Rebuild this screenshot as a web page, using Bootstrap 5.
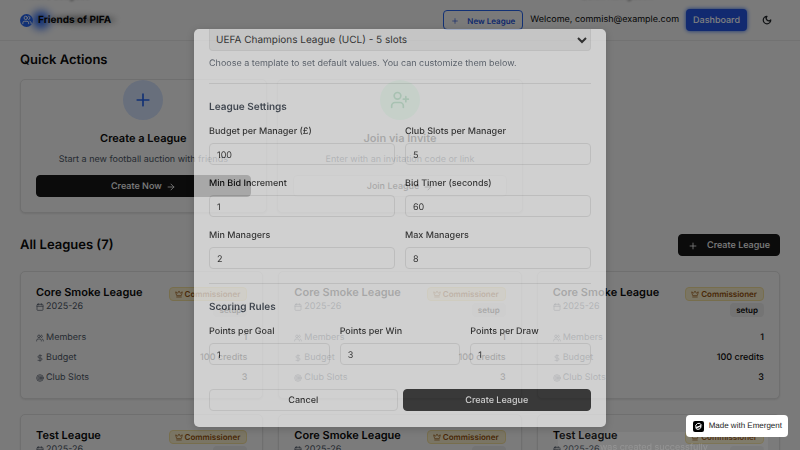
<!DOCTYPE html>
<html lang="en">
<head>
<meta charset="utf-8">
<meta name="viewport" content="width=device-width, initial-scale=1">
<title>Friends of PIFA</title>
<link href="https://cdn.jsdelivr.net/npm/bootstrap@5.3.0/dist/css/bootstrap.min.css" rel="stylesheet">
<style>
body{font-family:Inter,sans-serif;font-size:9px;line-height:14px;color:#0a0a0a;background:#f5f5f5;overflow:hidden;height:100vh;text-rendering:geometricPrecision}
button,input,select{text-rendering:inherit}
svg{fill:none;stroke:currentColor;stroke-width:2;stroke-linecap:round;stroke-linejoin:round;flex:none}
.i8{width:8px;height:8px}.i10{width:10px;height:10px}.i20{width:20px;height:20px}
.btn{font-size:9px;line-height:14px;padding:4px 9px 2px;border-radius:4px;font-weight:500}
.btn-ink{background:#171717;color:#fafafa;border-color:#171717}
.btn-line{background:#fafafa;border-color:#e5e5e5;color:#0a0a0a}
.topbar{height:41px;padding:0 20px;border-bottom:1px solid #e4e4e4;position:relative;overflow:hidden}
.peek{position:absolute;top:-10px;filter:blur(1px);color:#777;font-weight:500}
.peek-left{left:24px}.peek-right{left:580px}
.glow{position:absolute;border-radius:50%}
.glow-blue{left:32px;top:11px;width:18px;height:18px;background:#2563eb;filter:blur(4px)}
.glow-ink{left:48px;top:16px;width:68px;height:8px;background:#999;filter:blur(3px)}
.brand{gap:5px}
.logo-dot{width:13px;height:13px;border-radius:50%;background:#2563eb;color:#fff}
.brand-name{font-size:10px;font-weight:700;color:#0a0a0a;text-decoration:none}
.btn-new{font-size:8px;color:#2452d8;border-color:#2563eb;padding:3px 7px 1px;font-weight:600;gap:8px}
.topnav{gap:7px}
.btn-dash{background:#2455e0;color:#fff;padding:4px 6px 2px;box-shadow:0 0 4px #2563eb}
.btn-moon{padding:3px 7px}
.btn-moon svg{stroke-width:3}
.page{padding:11px 20px 0}
h2{font-size:13px;line-height:16px;font-weight:600;margin:0}
h3{font-size:11px;line-height:16px;font-weight:600;margin:0}
.tiles{display:grid;grid-template-columns:repeat(3,1fr);gap:10px;margin-top:11px}
.leagues{display:grid;grid-template-columns:repeat(3,1fr);gap:15px;margin-top:15px}
.card{border:1px solid #dedede;border-radius:5px;background:#f7f7f7;color:inherit;box-shadow:0 1px 2px #ddd}
.tile{padding:0 15px 15px;text-align:center}
.tile p{margin:7px 0 8px}
.disc{width:40px;height:40px;border-radius:50%;margin:0 auto 10px}
.disc-blue{background:#d0def8;color:#2563eb}.disc-green{background:#bbf7d0;color:#16a34a}
.soft{color:#4b5563}
.listhead{margin-top:21px}
.btn-add{gap:9px}
.league{padding:12px 15px 13px}
.facts{margin-top:14px;gap:6px}
.ico-text{gap:2px}
.tagc{background:#f5ebc8;color:#92500e;border:1px solid #efdc9a;border-radius:4px;padding:0 6px 0 5px;line-height:12px;font-weight:600;font-size:8px;gap:2px}
.tags{background:#e8e8e8;border-radius:4px;padding:0 6px;line-height:14px;font-weight:600;font-size:8px}
.tagcol{gap:2px;padding-top:3px}
.veil{position:fixed;inset:0;background:rgba(0,0,0,.5)}
.stage{position:fixed;inset:0;padding:29px 16px 23px}
.dialog{width:412px;max-width:100%;border-radius:5px;background:#fff;opacity:.65;padding:0 15px 16px;box-shadow:0 2px 8px #0004}
.pick{appearance:auto;display:block;width:100%;height:22px;font-size:10px;background:#efefef;color:#0a0a0a;border:1px solid #e2e2e2;border-top:0;border-radius:0 0 4px 4px;padding:0 2px}
.help{margin:6px 0 12px}
.rule{border-top:1px solid #e2e2e2}
.rule-next{margin-top:14px}
.sub{font-size:10px;line-height:16px;font-weight:600;color:#1f2937;margin:15px 0 10px}
.fields{display:grid;gap:12px 10px}
.two{grid-template-columns:1fr 1fr}.three{grid-template-columns:repeat(3,1fr)}
label{display:block;font-weight:500;margin-bottom:4px}
.form-control{height:22px;font-size:9px;line-height:14px;padding:4px 7px 2px;border:1px solid #e2e2e2;border-radius:4px;background:transparent;color:#0a0a0a}
.actions{margin-top:24px;gap:5px}
.actions .btn{flex:1 1 0}
.actions .btn-line{background:transparent}
.notice{position:fixed;right:32px;bottom:0;width:210px;height:18px;padding:10px 0 0 42px;background:#ffffff0d;color:#ffffff26;line-height:12px;overflow:hidden}
.made{position:fixed;right:12px;bottom:13px;background:#fff;border-radius:4px;color:#222;padding:4px 6px 4px 7px;gap:5px;font:8px/14px "Liberation Sans",sans-serif;text-decoration:none}
.made-mark{width:11px;height:11px}
</style>
<script src="https://cdn.jsdelivr.net/npm/bootstrap@5.3.0/dist/js/bootstrap.bundle.min.js"></script>
</head>
<body>
<svg class="d-none">
<symbol id="plus" viewBox="0 0 24 24"><path d="M5 12h14M12 5v14"/></symbol>
<symbol id="arrow" viewBox="0 0 24 24"><path d="M5 12h14m-7-7 7 7-7 7"/></symbol>
<symbol id="users" viewBox="0 0 24 24"><path d="M16 21v-2a4 4 0 0 0-4-4H6a4 4 0 0 0-4 4v2M22 21v-2a4 4 0 0 0-3-3.9M16 3.1a4 4 0 0 1 0 7.8"/><circle cx="9" cy="7" r="4"/></symbol>
<symbol id="userplus" viewBox="0 0 24 24"><path d="M16 21v-2a4 4 0 0 0-4-4H6a4 4 0 0 0-4 4v2M19 8v6M22 11h-6"/><circle cx="9" cy="7" r="4"/></symbol>
<symbol id="cal" viewBox="0 0 24 24"><rect x="3" y="4" width="18" height="18" rx="2"/><path d="M8 2v4M16 2v4M3 10h18"/></symbol>
<symbol id="dollar" viewBox="0 0 24 24"><path d="M12 2v20M17 5H9.5a3.500 3.500 0 0 0 0 7h5a3.500 3.500 0 0 1 0 7H6"/></symbol>
<symbol id="target" viewBox="0 0 24 24"><circle cx="12" cy="12" r="10"/><circle cx="12" cy="12" r="6"/><circle cx="12" cy="12" r="2"/></symbol>
<symbol id="crown" viewBox="0 0 24 24"><path d="M11.600 3.300a.5.5 0 0 1 .8 0l3 5.600a1 1 0 0 0 1.500.3L21.200 5.500a.5.5 0 0 1 .8.500l-2.800 10.300a1 1 0 0 1-1 .7H5.800a1 1 0 0 1-1-.7L2 6a.5.5 0 0 1 .8-.5l4.300 3.700a1 1 0 0 0 1.500-.3zM5 21h14"/></symbol>
<symbol id="moon" viewBox="0 0 24 24"><path d="M12 3a6 6 0 0 0 9 9 9 9 0 1 1-9-9Z"/></symbol>
</svg>

<header class="topbar d-flex align-items-center justify-content-between">
  <span class="peek peek-left">Active Leagues</span>
  <span class="peek peek-right">Quick Navigation</span>
  <span class="glow glow-blue"></span><span class="glow glow-ink"></span>
  <div class="brand d-flex align-items-center position-relative">
    <span class="logo-dot d-flex align-items-center justify-content-center"><svg class="i10"><use href="#users"/></svg></span>
    <a href="#" class="brand-name">Friends of PIFA</a>
  </div>
  <nav class="topnav d-flex align-items-center">
    <button class="btn btn-new d-flex align-items-center"><svg class="i8"><use href="#plus"/></svg>New League</button>
    <span>Welcome, commish@example.com</span>
    <button class="btn btn-dash">Dashboard</button>
    <button class="btn btn-moon" aria-label="Dark mode"><svg class="i10 d-block"><use href="#moon"/></svg></button>
  </nav>
</header>

<main class="page">
  <h2>Quick Actions</h2>
  <div class="tiles">
    <section class="card tile">
      <div class="disc disc-blue d-flex align-items-center justify-content-center"><svg class="i20"><use href="#plus"/></svg></div>
      <h3>Create a League</h3>
      <p class="soft">Start a new football auction with friends</p>
      <button class="btn btn-ink d-flex align-items-center justify-content-center gap-1">Create Now <svg class="i10"><use href="#arrow"/></svg></button>
    </section>
    <section class="card tile">
      <div class="disc disc-green d-flex align-items-center justify-content-center"><svg class="i20"><use href="#userplus"/></svg></div>
      <h3>Join via Invite</h3>
      <p class="soft">Enter with an invitation code or link</p>
      <button class="btn btn-line d-flex align-items-center justify-content-center gap-1">Join League <svg class="i10"><use href="#arrow"/></svg></button>
    </section>
  </div>
  <div class="listhead d-flex justify-content-between align-items-center">
    <h2>All Leagues (7)</h2>
    <button class="btn btn-ink btn-add d-flex align-items-center"><svg class="i10"><use href="#plus"/></svg>Create League</button>
  </div>
  <div class="leagues" id="leagues"></div>
</main>

<template id="league">
  <section class="card league">
    <div class="d-flex justify-content-between">
      <div>
        <h3></h3>
        <div class="ico-text soft d-flex align-items-center"><svg class="i8"><use href="#cal"/></svg>2025-26</div>
      </div>
      <div class="tagcol d-flex flex-column align-items-end">
        <span class="tagc d-flex align-items-center"><svg class="i8"><use href="#crown"/></svg>Commissioner</span>
        <span class="tags">setup</span>
      </div>
    </div>
    <div class="facts d-flex flex-column">
      <div class="d-flex justify-content-between"><span class="ico-text soft d-flex align-items-center"><svg class="i8"><use href="#users"/></svg>Members</span><span class="fw-medium">1</span></div>
      <div class="d-flex justify-content-between"><span class="ico-text soft d-flex align-items-center"><svg class="i8"><use href="#dollar"/></svg>Budget</span><span class="fw-medium">100 credits</span></div>
      <div class="d-flex justify-content-between"><span class="ico-text soft d-flex align-items-center"><svg class="i8"><use href="#target"/></svg>Club Slots</span><span class="fw-medium">3</span></div>
    </div>
  </section>
</template>

<div class="veil"></div>
<div class="notice">was created successfully</div>

<div class="stage d-flex justify-content-center align-items-start">
  <form class="dialog">
    <select class="pick" aria-label="Competition template"><option>UEFA Champions League (UCL) - 5 slots</option></select>
    <p class="soft help">Choose a template to set default values. You can customize them below.</p>
    <div class="rule"></div>
    <h4 class="sub">League Settings</h4>
    <div class="fields two">
      <div><label for="budget">Budget per Manager (£)</label><input class="form-control" id="budget" value="100"></div>
      <div><label for="slots">Club Slots per Manager</label><input class="form-control" id="slots" value="5"></div>
      <div><label for="inc">Min Bid Increment</label><input class="form-control" id="inc" value="1"></div>
      <div><label for="timer">Bid Timer (seconds)</label><input class="form-control" id="timer" value="60"></div>
      <div><label for="minm">Min Managers</label><input class="form-control" id="minm" value="2"></div>
      <div><label for="maxm">Max Managers</label><input class="form-control" id="maxm" value="8"></div>
    </div>
    <div class="rule rule-next"></div>
    <h4 class="sub">Scoring Rules</h4>
    <div class="fields three">
      <div><label for="goal">Points per Goal</label><input class="form-control" id="goal" value="1"></div>
      <div><label for="win">Points per Win</label><input class="form-control" id="win" value="3"></div>
      <div><label for="draw">Points per Draw</label><input class="form-control" id="draw" value="1"></div>
    </div>
    <div class="actions d-flex">
      <button type="button" class="btn btn-line">Cancel</button>
      <button type="button" class="btn btn-ink">Create League</button>
    </div>
  </form>
</div>

<a class="made d-flex align-items-center" href="#">
  <svg class="made-mark" viewBox="0 0 22 22"><rect width="22" height="22" rx="4" fill="#000" stroke="none"/><path d="M17 8a6 6 0 0 0-11 5l10-4M5 14a6 6 0 0 0 11-4L7 14" stroke="#fff"/></svg>Made with Emergent
</a>
<script>
const tpl = document.getElementById('league');
const names = ['Core Smoke League', 'Core Smoke League', 'Core Smoke League', 'Test League', 'Core Smoke League', 'Test League'];
for (const name of names) {
  const item = tpl.content.cloneNode(true);
  item.querySelector('h3').textContent = name;
  document.getElementById('leagues').append(item);
}
</script>
</body>
</html>
